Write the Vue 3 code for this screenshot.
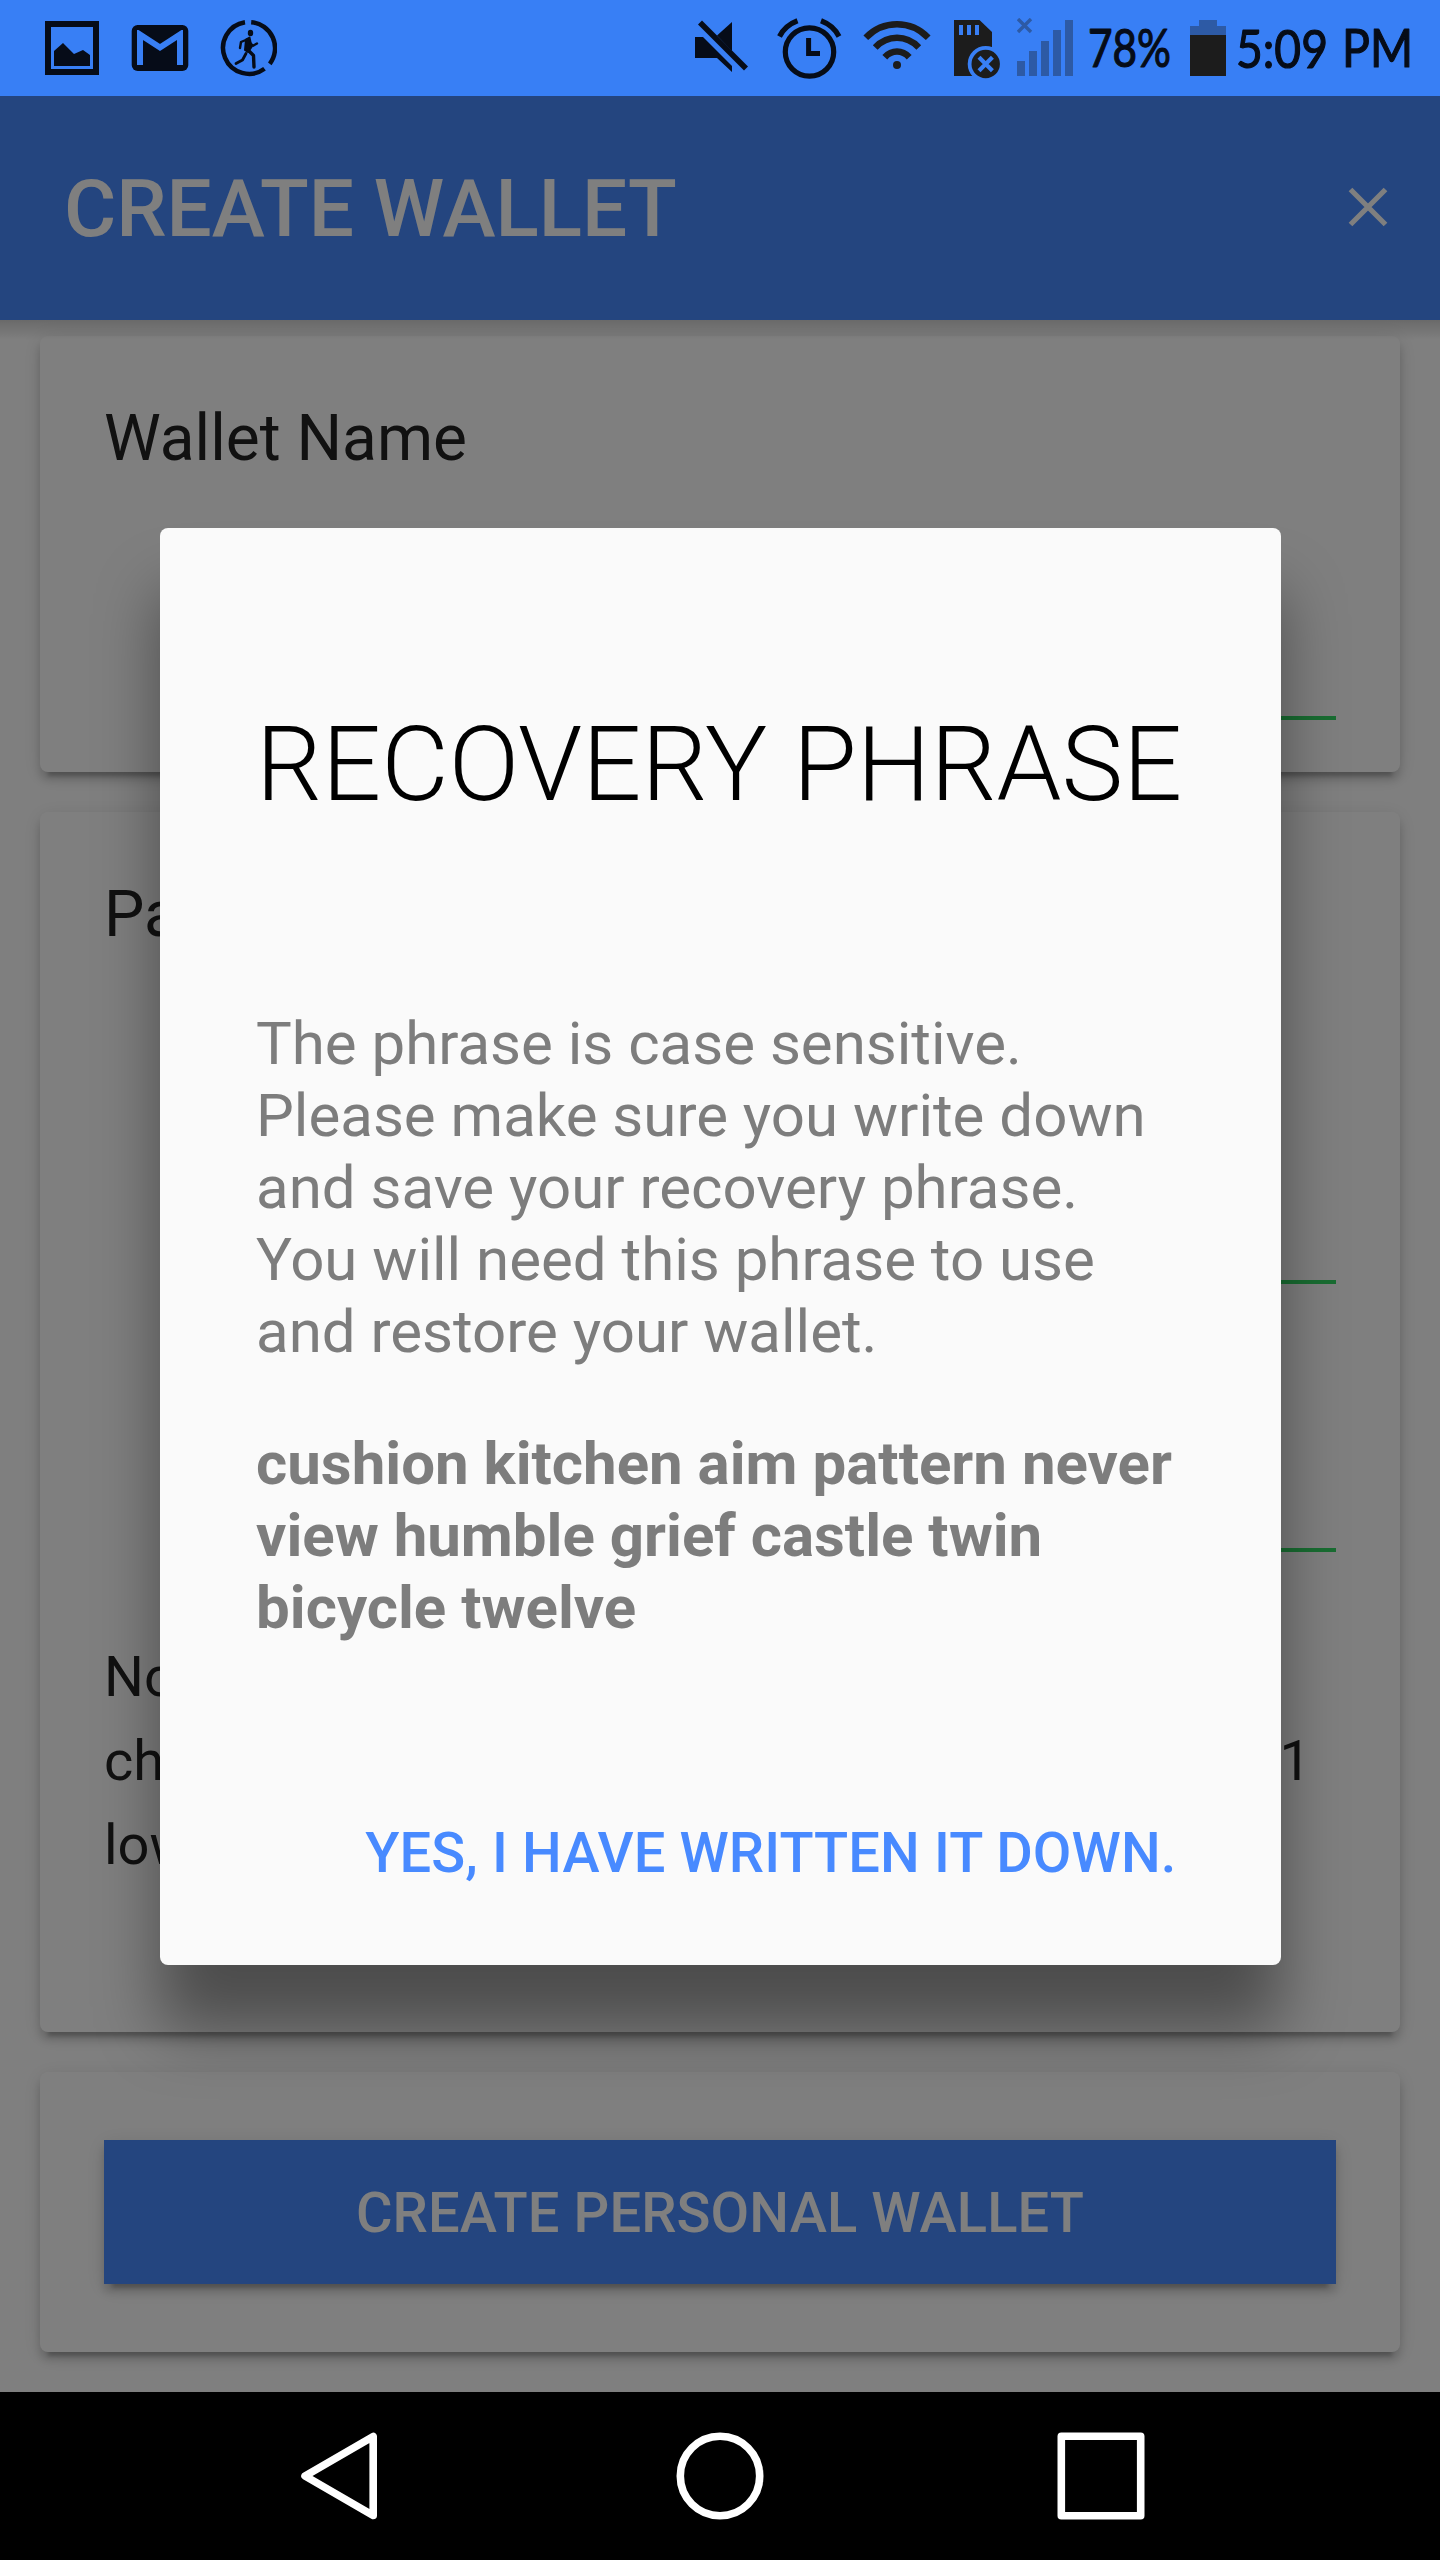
<script setup>
const notifications = ['picture', 'mail', 'runner']
const signalBars = [
  { x: 0, h: 15 },
  { x: 12, h: 25 },
  { x: 24, h: 35 },
  { x: 36, h: 46 },
  { x: 48, h: 56 },
]
const message =
  'The phrase is case sensitive. Please make sure you write down and save your recovery phrase. You will need this phrase to use and restore your wallet.'
const phrase = 'cushion kitchen aim pattern never view humble grief castle twin bicycle twelve'
</script>

<template>
  <div class="screen">
    <div class="status">
      <div class="notices">
        <svg v-for="n in notifications" :key="n" :class="n" width="58" height="60" viewBox="0 0 58 60">
          <g v-if="n === 'picture'">
            <path d="M5 6h48v48H5z" fill="none" stroke="#060c18" stroke-width="6" />
            <path d="M11 33l9-8 11 11 9-4 7 5v11H11z" fill="#060c18" />
          </g>
          <g v-else-if="n === 'mail'">
            <rect x="0.7" y="7" width="56.6" height="46" rx="6" fill="#060c18" />
            <path d="M9 47V16.500L29 29.500 49 16.500V47" fill="none" stroke="#387ff5" stroke-width="6" />
            <path d="M6 12h6L29 24.500 46 12h6V7H6z" fill="#060c18" />
          </g>
          <g v-else fill="none" stroke="#060c18" stroke-linecap="butt">
            <path d="M32.200 4.200A26 26 0 0 1 50.800 45.800M45.500 50.800A26 26 0 1 1 26 4.200" stroke-width="4.500" />
            <ellipse cx="31.500" cy="15" rx="2.700" ry="3.300" fill="#060c18" stroke="none" />
            <path d="M30.500 19.500L27 21.500l-1 10.500 3 2 3.500-5z" fill="#060c18" stroke-width="2" stroke-linejoin="round" />
            <path d="M28 21.500l-6 2.500-1 6M31 25l3 2.800 4-2.300" stroke-width="2.400" stroke-linejoin="round" stroke-linecap="round" />
            <path d="M29.500 32.500l5 5 .5 11.500" stroke-width="3.400" stroke-linejoin="round" stroke-linecap="round" />
            <path d="M27 35.500l-3.500 6.500-6.500 3.500" stroke-width="2.800" stroke-linejoin="round" stroke-linecap="round" />
          </g>
        </svg>
      </div>

      <div class="system">
        <svg class="mute" width="54" height="54" viewBox="0 0 54 54">
          <path d="M0 17h8l29 29v6L22 38H0z" fill="#060c18" />
          <path d="M22 15.500L37 2v29z" fill="#060c18" />
          <path d="M5 2.500l46 46" stroke="#060c18" stroke-width="5.600" />
        </svg>
        <svg class="alarm" width="66" height="62" viewBox="0 0 66 62" fill="none" stroke="#060c18">
          <circle cx="32.500" cy="35" r="24.200" stroke-width="5.200" />
          <path d="M31.600 21v15.500h11.400" stroke-width="5" />
          <path d="M2.500 19.500Q8 8.500 20.500 3.800M44 3.800Q56.500 8.500 62 19.500" stroke-width="5.200" />
        </svg>
        <svg class="wifi" width="68" height="52" viewBox="0 0 68 52" fill="none" stroke="#1c1c1c" stroke-width="6.600">
          <path d="M2.800 17.700Q16 4.300 34 4.300T65.200 17.700M12.200 27.500Q21.500 17.800 34 17.800T55.800 27.500M21.800 37.200Q27 31.500 34 31.500T46.200 37.200" />
          <circle cx="34" cy="45" r="4" fill="#1c1c1c" stroke="none" />
        </svg>
        <svg class="sdcard" width="46" height="60" viewBox="0 0 46 60">
          <path d="M0 1h25.500L38 13v44H0z" fill="#1c1c1c" />
          <path d="M5 6h4v10H5zM13 6h4v10h-4zM21 6h4v10h-4z" fill="#387ff5" />
          <circle cx="31.700" cy="45" r="18" fill="#387ff5" />
          <circle cx="31.700" cy="45" r="14.200" fill="#1c1c1c" />
          <path d="M25 38.300l13.400 13.400M38.400 38.300L25 51.700" stroke="#387ff5" stroke-width="4.200" />
        </svg>
        <svg class="signal" width="56" height="60" viewBox="0 0 56 60">
          <path d="M1 1l13 13M14 1L1 14" stroke="#2d5aa5" stroke-width="3.400" />
          <rect v-for="b in signalBars" :key="b.x" :x="b.x" :y="58 - b.h" width="8" :height="b.h" fill="#2d5aa5" />
        </svg>
        <svg class="percent" width="84" height="84" viewBox="0 0 84 84">
          <text x="0" y="61" textLength="83" lengthAdjust="spacingAndGlyphs">78%</text>
        </svg>
        <svg class="battery" width="36" height="56" viewBox="0 0 36 56">
          <path d="M9 0h18v6h9v10H0V6h9z" fill="#2d5aa5" />
          <path d="M0 15h36v41H0z" fill="#1c1c1c" />
        </svg>
        <svg class="clock" width="180" height="84" viewBox="0 0 180 84">
          <text x="0" y="62" textLength="92" lengthAdjust="spacingAndGlyphs">5:09</text>
          <text x="106" y="61" textLength="71" lengthAdjust="spacingAndGlyphs">PM</text>
        </svg>
      </div>
    </div>

    <div class="app">
      <header class="toolbar">
        <h1>CREATE WALLET</h1>
        <svg width="40" height="40" viewBox="0 0 40 40">
          <path d="M2.500 2.500l35 35M37.500 2.500l-35 35" stroke="#fff" stroke-width="5.200" />
        </svg>
      </header>

      <main class="content">
        <section class="card name-card">
          <h2>Wallet Name</h2>
          <div class="field first"></div>
        </section>
        <section class="card password-card">
          <h2>Password</h2>
          <div class="field second"></div>
          <div class="field third"></div>
          <div class="note">
            <span>Note: Password must be at least 8</span>
            <span class="spread"><span>characters long and contain</span><span>1</span></span>
            <span>lowercase</span>
          </div>
        </section>
        <section class="card submit-card">
          <button class="submit">CREATE PERSONAL WALLET</button>
        </section>
      </main>

      <div class="backdrop">
        <div class="dialog">
          <h3>RECOVERY PHRASE</h3>
          <p>{{ message }}</p>
          <p class="phrase">{{ phrase }}</p>
          <button class="confirm">YES, I HAVE WRITTEN IT DOWN.</button>
        </div>
      </div>
    </div>

    <nav class="navbar">
      <svg width="88" height="88" viewBox="0 0 88 88">
        <path d="M78.200 4.500v79L10 44z" />
      </svg>
      <svg width="88" height="88" viewBox="0 0 88 88">
        <circle cx="44" cy="44" r="39.700" />
      </svg>
      <svg width="88" height="88" viewBox="0 0 88 88">
        <rect x="4.300" y="4.300" width="79.400" height="79.400" />
      </svg>
    </nav>
  </div>
</template>

<style>
html,
body {
  margin: 0;
}
</style>

<style scoped>
.screen {
  width: 1440px;
  height: 2560px;
  display: flex;
  flex-direction: column;
  overflow: hidden;
  font-family: Roboto, sans-serif;
}
svg {
  display: block;
  flex: none;
}
h1,
h2,
h3,
p {
  margin: 0;
  font-weight: 400;
}
button {
  border: 0;
  padding: 0;
  background: none;
  font: 500 56px/1.2 Roboto, sans-serif;
  letter-spacing: 0.12px;
}
.status {
  height: 96px;
  flex: none;
  display: flex;
  justify-content: space-between;
  background: #387ff5;
}
.notices {
  display: flex;
  gap: 30px;
  padding: 18px 0 0 43px;
}
.system {
  display: flex;
  align-items: flex-start;
  padding-right: 24px;
}
.mute { margin-top: 20px; }
.alarm { margin: 17px 0 0 28px; }
.wifi { margin: 20px 0 0 20px; }
.sdcard { margin: 19px 0 0 23px; }
.signal { margin: 18px 0 0 17px; }
.percent { margin: 6px 0 0 15px; }
.battery { margin: 20px 0 0 18px; }
.clock { margin: 6px 0 0 10px; }
.system text {
  font: 400 52px Lato, sans-serif;
  fill: #060c18;
  stroke: #060c18;
  stroke-width: 1.2px;
  stroke-linejoin: round;
}
.app {
  position: relative;
  flex: 1;
  display: flex;
  flex-direction: column;
  background: #fff;
}
.toolbar {
  position: relative;
  z-index: 1;
  height: 224px;
  box-sizing: border-box;
  display: flex;
  align-items: center;
  justify-content: space-between;
  padding: 0 52px 0 64px;
  background: #488aff;
}
.toolbar::after {
  content: '';
  position: absolute;
  left: 0;
  right: 0;
  top: 100%;
  height: 20px;
  background: linear-gradient(rgba(0, 0, 0, 0.17), rgba(0, 0, 0, 0));
}
.toolbar h1 {
  padding-top: 2px;
  font-size: 80px;
  font-weight: 500;
  line-height: 96px;
  color: #fff;
}
.toolbar svg {
  margin-bottom: 2px;
}
.content {
  display: flex;
  flex-direction: column;
  gap: 40px;
  padding: 16px 40px 40px;
}
.card {
  border-radius: 8px;
  background: #fff;
  box-shadow: 0 8px 8px rgba(0, 0, 0, 0.14), 0 12px 4px -8px rgba(0, 0, 0, 0.2),
    0 4px 20px rgba(0, 0, 0, 0.12);
  padding: 65px 64px 0;
  box-sizing: border-box;
}
.name-card { height: 436px; }
.password-card { height: 1220px; }
.submit-card { height: 280px; padding-top: 68px; }
.card h2 {
  font-size: 64px;
  line-height: 76px;
  color: #222;
}
.field {
  margin-left: 72px;
  border-bottom: 4px solid #32db64;
}
.first { height: 239px; }
.second { height: 327px; }
.third { height: 264px; }
.note {
  margin-top: 83px;
  display: flex;
  flex-direction: column;
  font-size: 56px;
  line-height: 84px;
  color: #222;
}
.spread {
  display: flex;
  justify-content: space-between;
  padding-right: 25px;
}
.submit {
  display: block;
  width: 100%;
  height: 144px;
  padding-top: 3px;
  background: #488aff;
  color: #fff;
  box-shadow: 0 8px 8px rgba(0, 0, 0, 0.14), 0 12px 4px -8px rgba(0, 0, 0, 0.2),
    0 4px 20px rgba(0, 0, 0, 0.12);
}
.backdrop {
  position: absolute;
  inset: 0;
  z-index: 2;
  display: flex;
  align-items: flex-start;
  padding: 432px 0 0 160px;
  background: rgba(0, 0, 0, 0.5);
}
.dialog {
  width: 1120.5px;
  height: 1436.5px;
  box-sizing: border-box;
  padding: 0 96px;
  display: flex;
  flex-direction: column;
  border-radius: 8px;
  background: #fafafa;
  box-shadow: 0 64px 64px rgba(0, 0, 0, 0.4);
}
.dialog h3 {
  margin-top: 173px;
  font-size: 104px;
  font-weight: 300;
  line-height: 128px;
  white-space: nowrap;
  color: #000;
}
.dialog p {
  margin-top: 179px;
  font-size: 60px;
  line-height: 72px;
  color: #7d7d7d;
}
.dialog .phrase {
  margin-top: 60px;
  font-weight: 700;
}
.confirm {
  align-self: flex-end;
  margin-top: 176px;
  padding-right: 8px;
  color: #488aff;
}
.navbar {
  height: 168px;
  flex: none;
  display: flex;
  align-items: center;
  justify-content: center;
  gap: 293px;
  background: #000;
}
.navbar svg {
  fill: none;
  stroke: #fff;
  stroke-width: 7.6px;
  stroke-linejoin: round;
}
</style>
